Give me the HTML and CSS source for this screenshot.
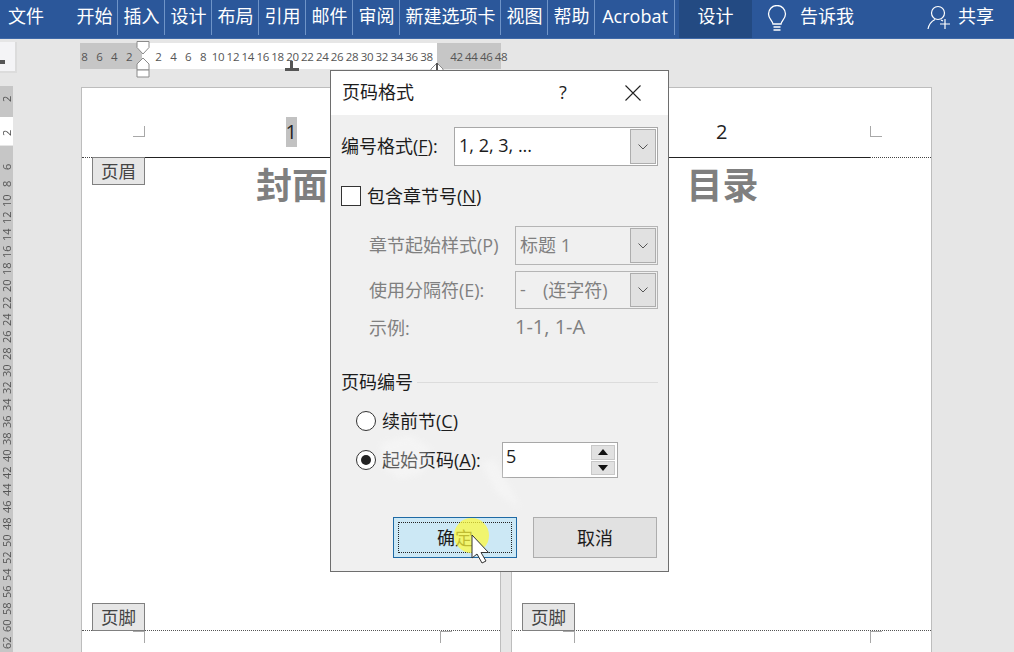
FILE: index.html
```html
<!DOCTYPE html>
<html lang="zh">
<head>
<meta charset="utf-8">
<title>页码格式</title>
<link rel="stylesheet" href="styles.css">
</head>
<body>
<div class="app">
  <header class="ribbon">
    <div class="tab file">文件</div>
    <nav class="tabs">
      <div class="tab">开始</div>
      <div class="tab">插入</div>
      <div class="tab">设计</div>
      <div class="tab">布局</div>
      <div class="tab">引用</div>
      <div class="tab">邮件</div>
      <div class="tab">审阅</div>
      <div class="tab wide">新建选项卡</div>
      <div class="tab">视图</div>
      <div class="tab">帮助</div>
      <div class="tab acrobat">Acrobat</div>
    </nav>
    <div class="ctx">设计</div>
    <div class="tell">
      <svg class="bulb" width="22" height="28" viewBox="0 0 22 28" fill="none" stroke="#fff" stroke-width="1.3">
        <path d="M7 19c0-3-4.500-5-4.500-10a8.500 8.500 0 0 1 17 0c0 5-4.500 7-4.500 10z"/>
        <path d="M7.500 22h7M7.500 25h7" stroke-width="1.500"/>
      </svg>
      <span class="bar-text">告诉我</span>
    </div>
    <div class="share">
      <svg width="24" height="26" viewBox="0 0 24 26" fill="none" stroke="#fff" stroke-width="1.200">
        <circle cx="11" cy="9" r="6.500"/>
        <path d="M1 25c1-5 4-8 7-9.500M14 16l2 1M18 15v10M13 20h10"/>
      </svg>
      <span class="bar-text">共享</span>
    </div>
  </header>

  <div class="workspace">
    <aside class="rail">
      <div class="rail-box"><span class="rail-mark"></span></div>
      <div class="vruler">
        <div class="vseg seg-a"><span class="vnum">2</span></div>
        <div class="vseg seg-b"><span class="vnum">2</span></div>
        <div class="vseg seg-c">
          <span class="vnum">6</span><span class="vnum">8</span><span class="vnum">10</span><span class="vnum">12</span><span class="vnum">14</span><span class="vnum">16</span><span class="vnum">18</span><span class="vnum">20</span><span class="vnum">22</span><span class="vnum">24</span><span class="vnum">26</span><span class="vnum">28</span><span class="vnum">30</span><span class="vnum">32</span><span class="vnum">34</span><span class="vnum">36</span><span class="vnum">38</span><span class="vnum">40</span><span class="vnum">42</span><span class="vnum">44</span><span class="vnum">46</span><span class="vnum">48</span><span class="vnum">50</span><span class="vnum">52</span><span class="vnum">54</span><span class="vnum">56</span><span class="vnum">58</span><span class="vnum">60</span><span class="vnum">62</span>
        </div>
      </div>
    </aside>

    <main class="main">
      <div class="hruler">
        <div class="hseg left">
          <span class="hnum">8</span><span class="hnum">6</span><span class="hnum">4</span><span class="hnum">2</span>
        </div>
        <div class="hseg mid">
          <span class="hnum">2</span><span class="hnum">4</span><span class="hnum">6</span><span class="hnum">8</span><span class="hnum">10</span><span class="hnum">12</span><span class="hnum">14</span><span class="hnum">16</span><span class="hnum">18</span><span class="hnum">20</span><span class="hnum">22</span><span class="hnum">24</span><span class="hnum">26</span><span class="hnum">28</span><span class="hnum">30</span><span class="hnum">32</span><span class="hnum">34</span><span class="hnum">36</span><span class="hnum">38</span>
          <span class="tabstop"></span>
        </div>
        <div class="hseg right">
          <span class="hnum">42</span><span class="hnum">44</span><span class="hnum">46</span><span class="hnum">48</span>
        </div>
        <svg class="indent" width="14" height="37" viewBox="0 0 14 37" fill="#fff" stroke="#8a8a8a">
          <path d="M1 .5h12v6L7 13 1 6.500z"/>
          <path d="M7 17l6 6v6H1v-6z"/>
          <path d="M1 29h12v7H1z"/>
        </svg>
        <svg class="right-indent" width="14" height="10" viewBox="0 0 14 10" fill="#fff" stroke="#8a8a8a">
          <path d="M7 1l6 6v3H1V7z"/><path d="M7 1v9" stroke="#555" stroke-width="2"/>
        </svg>
      </div>

      <div class="pages">
        <section class="page">
          <div class="head first">
            <i class="mark mark-l"></i>
            <span class="pnum sel">1</span>
            <span class="tag">页眉</span>
          </div>
          <div class="content"><h1 class="title">封面</h1></div>
          <div class="foot">
            <span class="tag">页脚</span>
            <i class="fmark fmark-l"></i>
            <i class="fmark fmark-r"></i>
          </div>
        </section>
        <section class="page">
          <div class="head">
            <i class="solid"></i>
            <i class="mark mark-r"></i>
            <span class="pnum">2</span>
          </div>
          <div class="content"><h1 class="title">目录</h1></div>
          <div class="foot">
            <span class="tag">页脚</span>
            <i class="fmark fmark-l"></i>
            <i class="fmark fmark-r"></i>
          </div>
        </section>
      </div>
    </main>
  </div>

  <div class="dialog">
    <div class="dlg-title">
      <span class="dlg-name">页码格式</span>
      <span class="dlg-help">?</span>
      <svg class="dlg-close" width="16" height="16" viewBox="0 0 16 16" stroke="#222" stroke-width="1.100"><path d="M.5.5l15 15M15.500.5l-15 15"/></svg>
    </div>
    <div class="dlg-body">
      <div class="row r-format">
        <label class="lab w-format">编号格式(<u>F</u>):</label>
        <div class="select"><span class="val">1, 2, 3, ...</span><span class="drop"><svg width="10" height="6" viewBox="0 0 10 6" fill="none" stroke="#555"><path d="M.5.5L5 5 9.500.5"/></svg></span></div>
      </div>
      <div class="row r-check">
        <span class="check"></span>
        <label class="lab">包含章节号(<u>N</u>)</label>
      </div>
      <div class="row r-style off">
        <label class="lab w-sub">章节起始样式(P)</label>
        <div class="select"><span class="val">标题 1</span><span class="drop"><svg width="10" height="6" viewBox="0 0 10 6" fill="none" stroke="#555"><path d="M.5.5L5 5 9.500.5"/></svg></span></div>
      </div>
      <div class="row r-sep off">
        <label class="lab w-sub">使用分隔符(E):</label>
        <div class="select"><span class="val"><span class="dash">-</span>(连字符)</span><span class="drop"><svg width="10" height="6" viewBox="0 0 10 6" fill="none" stroke="#555"><path d="M.5.5L5 5 9.500.5"/></svg></span></div>
      </div>
      <div class="row r-sample off">
        <label class="lab w-sub">示例:</label>
        <span class="sample">1-1, 1-A</span>
      </div>
      <div class="row r-section">
        <span class="lab">页码编号</span>
        <span class="rule"></span>
      </div>
      <div class="row r-radio1">
        <span class="radio"></span>
        <label class="lab">续前节(<u>C</u>)</label>
      </div>
      <div class="row r-radio2">
        <span class="radio on"></span>
        <label class="lab w-start">起始页码(<u>A</u>):</label>
        <div class="spin">
          <span class="spin-val">5</span>
          <div class="spin-btns"><span class="up"></span><span class="down"></span></div>
        </div>
      </div>
      <div class="row r-buttons">
        <button class="btn ok"><span class="btn-in">确定</span></button>
        <button class="btn">取消</button>
      </div>
    </div>
    <svg class="scribble" width="240" height="90" viewBox="0 0 240 90" fill="#fff">
      <path d="M10 10l30-8 20 14-8 24-24 6-18-14zM110 30l14-4 26 50-24-16zM160 20l30-4 20 24-20 2z"/>
    </svg>
  </div>

  <div class="spot"></div>
  <svg class="cursor" width="20" height="30" viewBox="0 0 20 30" fill="#fff" stroke="#333">
    <path d="M1 1v23l5-4 5 9 4-2-5-8.500h7.500z"/>
  </svg>
</div>
</body>
</html>
```

FILE: styles.css
```css
* { box-sizing: border-box; }
html, body { margin: 0; padding: 0; }
body {
  font-family: "Open Sans", "Noto Sans CJK SC", sans-serif;
  color: #1c1c1c;
}
.app {
  position: relative;
  width: 1014px;
  height: 652px;
  overflow: hidden;
  background: #e6e6e6;
  display: flex;
  flex-direction: column;
}

/* ribbon */
.ribbon {
  height: 39px;
  flex: none;
  display: flex;
  background: #2b579a;
  color: #fff;
  font-size: 18px;
  border-bottom: 1px solid #3f69a8;
}
.tabs { display: flex; height: 35px; margin-left: 19px; }
.tab {
  width: 47px;
  height: 35px;
  padding-left: 1px;
  line-height: 32px;
  text-align: center;
  border-right: 1px solid #6f94c8;
  white-space: nowrap;
}
.tab.file { width: 52px; padding-left: 0; border-right: 0; }
.tab.wide { width: 101px; }
.tab.acrobat { width: 80px; font-weight: 500; font-size: 18px; }
.ctx {
  width: 73px;
  margin-left: 4px;
  background: #234a82;
  text-align: center;
  line-height: 32px;
}
.tell {
  display: flex;
  align-items: center;
  margin-left: 14px;
  height: 35px;
  gap: 12px;
}
.bulb { flex: none; margin-top: 3px; }
.bar-text { margin-bottom: 5px; }
.share {
  display: flex;
  align-items: center;
  margin-left: auto;
  margin-right: 20px;
  height: 35px;
  gap: 7px;
}
.share svg { margin-bottom: 1px; }

/* workspace */
.workspace { flex: 1; display: flex; min-height: 0; }
.rail { width: 81px; flex: none; }
.rail-box {
  width: 17px;
  height: 31px;
  margin-top: 3px;
  background: #f4f4f6;
  border: solid #dcdcdc;
  border-width: 0 2px 2px 0;
  position: relative;
}
.rail-mark {
  position: absolute;
  left: 0;
  top: 18px;
  width: 5px;
  height: 4px;
  background: #555;
}
.vruler { width: 13px; margin-top: 13px; }
.vseg { background: #c6c6c6; display: flex; flex-direction: column; }
.seg-a { height: 31px; padding-top: 4px; }
.seg-b { height: 28px; background: #fff; margin-bottom: 1px; padding-top: 7px; }
.seg-c { height: 520px; padding-top: 12px; }
.vnum {
  height: 17px;
  flex: none;
  font-size: 11px;
  line-height: 13px;
  color: #555;
  display: flex;
  align-items: center;
  justify-content: center;
  writing-mode: vertical-rl;
  transform: rotate(180deg);
  white-space: nowrap;
}

.main { flex: 1; min-width: 0; }
.hruler {
  position: relative;
  display: flex;
  height: 26px;
  margin-top: 4px;
  margin-left: -1px;
}
.hseg { display: flex; align-items: center; height: 26px; }
.hseg.left { width: 62px; background: #c6c6c6; padding-left: 0; }
.hseg.left .hnum:first-child { margin-left: -3px; }
.hseg.mid { width: 295px; background: #fff; padding-left: 9px; position: relative; }
.hseg.right { width: 64px; background: #c6c6c6; padding-left: 12px; }
.hnum {
  width: 14.900px;
  flex: none;
  text-align: center;
  font-size: 11.500px;
  letter-spacing: -.3px;
  color: #555;
}
.tabstop {
  position: absolute;
  left: 143px;
  bottom: -2px;
  width: 14px;
  height: 3px;
  background: #555;
}
.tabstop::before {
  content: "";
  position: absolute;
  left: 5px;
  top: -7px;
  width: 3px;
  height: 7px;
  background: #555;
}
.indent { position: absolute; left: 56px; top: -2px; }
.right-indent { position: absolute; left: 350px; top: 19px; }

.pages { display: flex; gap: 10px; margin-top: 18px; }
.page {
  flex: none;
  width: 421px;
  background: #fff;
  border: solid #bdbdbd;
  border-width: 1px 1px 0;
}
.page:first-child { width: 420px; }
.head {
  position: relative;
  height: 70px;
  border-bottom: 1px dotted #444;
  display: flex;
  justify-content: center;
  align-items: flex-start;
  padding-top: 29px;
}
.pnum {
  width: 11px;
  height: 30px;
  text-align: center;
  font-size: 20px;
  line-height: 30px;
  color: #222;
}
.pnum.sel { background: #c2c2c2; }
.solid {
  position: absolute;
  left: 64px;
  width: 294px;
  bottom: -1px;
  height: 1px;
  background: #222;
}
.first::after {
  content: "";
  position: absolute;
  left: 63px;
  right: 61px;
  bottom: -1px;
  height: 1px;
  background: #222;
}
.mark { position: absolute; bottom: 20px; width: 12px; height: 11px; border: 0 solid #a8a8a8; }
.mark-l { left: 51px; border-width: 0 1px 1px 0; }
.mark-r { left: 358px; border-width: 0 0 1px 1px; }
.tag {
  position: absolute;
  left: 10px;
  width: 53px;
  height: 28px;
  border: 1px solid #808080;
  background: #e6e6e6;
  color: #444;
  text-align: center;
  font-size: 17.500px;
  line-height: 27px;
}
.head .tag { top: 100%; }
.foot .tag { bottom: 100%; }
.content { height: 473px; }
.title {
  margin: -1px 0 0;
  padding-left: 2px;
  text-align: center;
  font-size: 36px;
  line-height: 52px;
  font-weight: 700;
  color: #7f7f7f;
  font-family: "Noto Sans CJK SC", sans-serif;
}
.foot { position: relative; height: 40px; border-top: 1px dotted #555; }
.fmark { position: absolute; top: 0; width: 12px; height: 12px; border: 0 solid #a8a8a8; }
.fmark-l { left: 51px; border-width: 1px 1px 0 0; }
.fmark-r { left: 358px; border-width: 1px 0 0 1px; }

/* dialog */
.dialog {
  position: absolute;
  left: 330px;
  top: 70px;
  width: 339px;
  height: 502px;
  border: 1px solid #6e6e6e;
  background: #f0f0f0;
  font-size: 18px;
}
.dlg-title {
  height: 44px;
  background: #fff;
  display: flex;
  align-items: center;
  padding-left: 11px;
}
.dlg-name { width: 217px; margin-bottom: 4px; }
.dlg-help { width: 66px; color: #222; margin-bottom: 2px; }
.dlg-close { flex: none; }
.dlg-body { padding: 0 10px; }
.row { display: flex; align-items: center; }
.lab { white-space: nowrap; margin-bottom: 3px; }
.lab u { text-underline-offset: 2px; }
.w-format { width: 113px; }
.w-sub { width: 146px; }
.w-start { width: 114px; }
.select {
  flex: 1;
  height: 100%;
  display: flex;
  align-items: stretch;
  background: #fff;
  border: 1px solid #a8a8a8;
  padding: 1px;
}
.val { flex: 1; padding: 0 0 3px 3px; display: flex; align-items: center; white-space: nowrap; }
.dash { width: 23px; flex: none; }
.drop {
  width: 26px;
  flex: none;
  background: #e1e1e1;
  border: 1px solid #adadad;
  display: flex;
  align-items: center;
  justify-content: center;
}
.off { color: #808080; padding-left: 28px; }
.off .select { background: #f0f0f0; border-color: #b5b5b5; }
.r-format { margin-top: 12px; height: 39px; }
.r-check { margin-top: 20px; height: 20px; gap: 6px; }
.check { width: 20px; height: 20px; background: #fff; border: 1px solid #333; flex: none; }
.r-style { margin-top: 20px; height: 39px; }
.r-sep { margin-top: 6px; height: 38px; }
.r-sample { margin-top: 9px; height: 20px; }
.sample { font-size: 20px; margin-bottom: 3px; }
.r-section { margin-top: 34px; height: 20px; gap: 4px; }
.rule { flex: 1; height: 1px; background: #dcdcdc; }
.r-radio1 { margin-top: 19px; height: 20px; padding-left: 15px; gap: 6px; }
.radio {
  position: relative;
  width: 20px;
  height: 20px;
  flex: none;
  border-radius: 50%;
  background: #fff;
  border: 1px solid #333;
}
.radio.on::after {
  content: "";
  position: absolute;
  left: 4px;
  top: 4px;
  width: 10px;
  height: 10px;
  border-radius: 50%;
  background: #222;
}
.r-radio2 { margin-top: 11px; height: 36px; padding-left: 15px; gap: 6px; }
.spin {
  width: 116px;
  height: 36px;
  background: #fff;
  border: 1px solid #a8a8a8;
  display: flex;
  justify-content: space-between;
  padding: 2px;
}
.spin-val { padding-left: 1px; line-height: 23px; }
.spin-btns { width: 24px; display: flex; flex-direction: column; gap: 1px; }
.spin-btns span {
  flex: 1;
  background: #e1e1e1;
  border: 1px solid #c8c8c8;
  position: relative;
}
.spin-btns span::after {
  content: "";
  position: absolute;
  left: 6px;
  width: 0;
  height: 0;
  border-left: 5px solid transparent;
  border-right: 5px solid transparent;
}
.up::after { top: 3px; border-bottom: 6px solid #111; }
.down::after { top: 3px; border-top: 6px solid #111; }
.r-buttons { margin-top: 39px; height: 41px; justify-content: flex-end; gap: 16px; padding-right: 1px; }
.btn {
  width: 124px;
  height: 41px;
  padding: 0 0 2px;
  background: #e1e1e1;
  border: 1px solid #adadad;
  font: inherit;
  color: #1c1c1c;
}
.btn.ok { background: #cce8f5; border-color: #1f6aa5; padding: 4px; }
.btn-in {
  display: block;
  height: 100%;
  border: 1px dotted #222;
  line-height: 30px;
}
.scribble {
  position: absolute;
  left: 40px;
  top: 362px;
  opacity: .3;
  filter: blur(3px);
  pointer-events: none;
}

/* pointer highlight */
.spot {
  position: absolute;
  left: 454px;
  top: 518px;
  width: 35px;
  height: 35px;
  border-radius: 50%;
  background: rgba(255, 250, 60, .72);
}
.cursor { position: absolute; left: 471px; top: 534px; }
```
